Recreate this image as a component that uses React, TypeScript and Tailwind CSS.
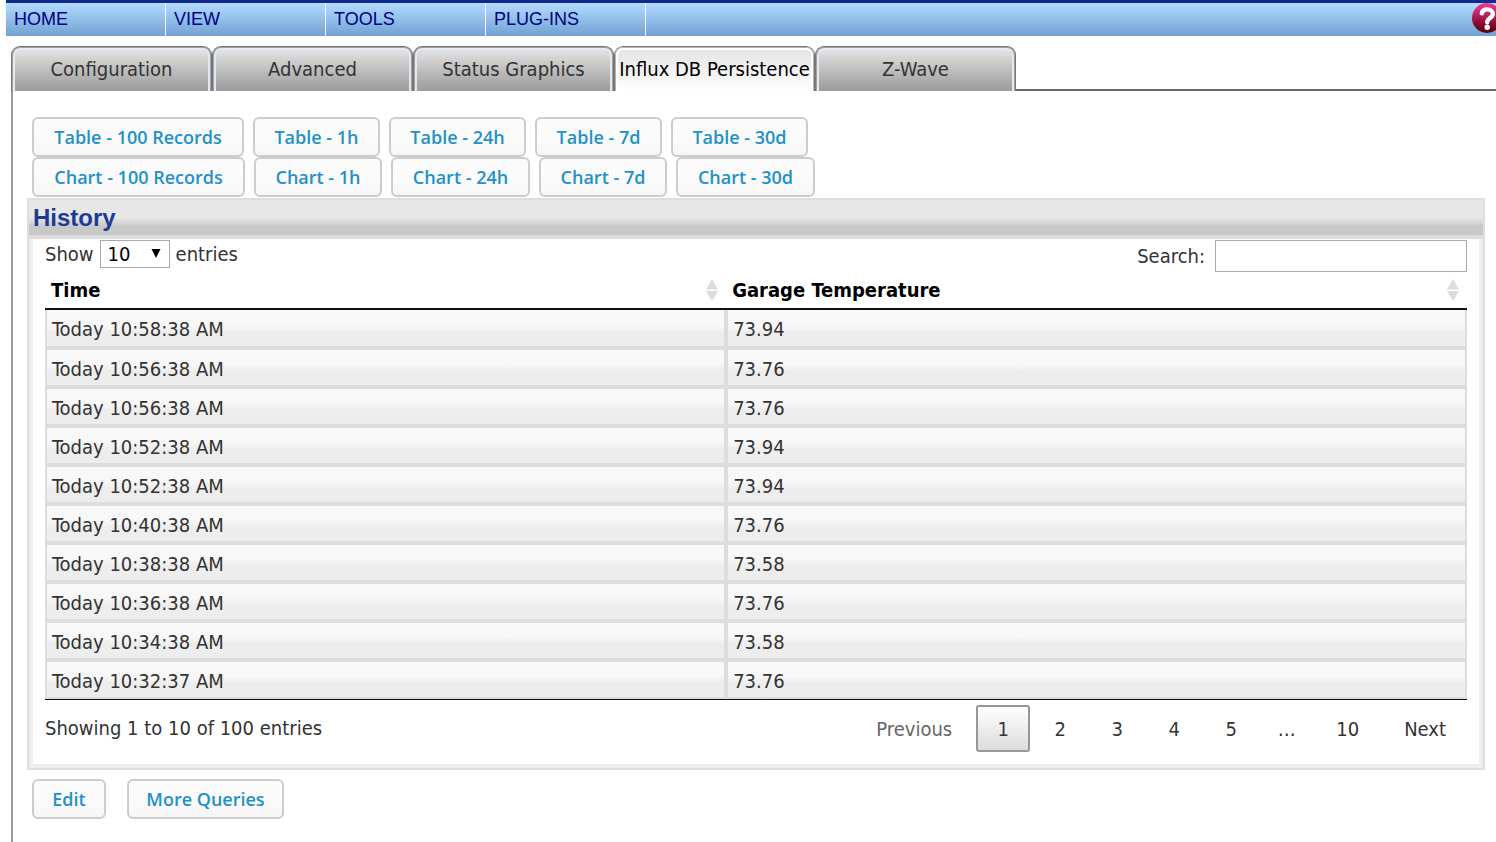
import { useState } from "react";

const menu = ["HOME", "VIEW", "TOOLS", "PLUG-INS"];

const tabs = ["Configuration", "Advanced", "Status Graphics", "Influx DB Persistence", "Z-Wave"];

const tableQueries = [
  { label: "Table - 100 Records", width: "w-[212px]" },
  { label: "Table - 1h", width: "w-[127px]" },
  { label: "Table - 24h", width: "w-[137px]" },
  { label: "Table - 7d", width: "w-[127px]" },
  { label: "Table - 30d", width: "w-[137px]" },
];

const chartQueries = [
  { label: "Chart - 100 Records", width: "w-[213px]" },
  { label: "Chart - 1h", width: "w-[128px]" },
  { label: "Chart - 24h", width: "w-[139px]" },
  { label: "Chart - 7d", width: "w-[128px]" },
  { label: "Chart - 30d", width: "w-[139px]" },
];

const rows = [
  ["Today 10:58:38 AM", "73.94"],
  ["Today 10:56:38 AM", "73.76"],
  ["Today 10:56:38 AM", "73.76"],
  ["Today 10:52:38 AM", "73.94"],
  ["Today 10:52:38 AM", "73.94"],
  ["Today 10:40:38 AM", "73.76"],
  ["Today 10:38:38 AM", "73.58"],
  ["Today 10:36:38 AM", "73.76"],
  ["Today 10:34:38 AM", "73.58"],
  ["Today 10:32:37 AM", "73.76"],
];

function HelpIcon() {
  return (
    <svg width="30" height="30" viewBox="0 0 30 30" className="block" aria-hidden="true">
      <defs>
        <linearGradient id="help-fill" x1="0" y1="0" x2="0" y2="1">
          <stop offset="0" stopColor="#f5359a" />
          <stop offset="0.3" stopColor="#c9286e" />
          <stop offset="0.65" stopColor="#8c0d35" />
          <stop offset="1" stopColor="#550008" />
        </linearGradient>
      </defs>
      <circle cx="15" cy="15" r="15" fill="url(#help-fill)" />
      <path
        d="M9.800 10.400C10.200 7.800 12.400 6.400 15.300 6.400c3.200 0 5.500 1.800 5.500 4.500 0 4-5.600 4.200-5.600 8.300"
        fill="none"
        stroke="#fff"
        strokeWidth="4.400"
        strokeLinecap="round"
      />
      <circle cx="15.200" cy="24.200" r="2.700" fill="#fff" />
    </svg>
  );
}

function SortIcon() {
  return (
    <svg width="12" height="22" viewBox="0 0 12 22" className="block" aria-hidden="true">
      <path d="M6 0 12 10.500H0ZM0 12h12L6 22Z" fill="#dcdcdc" />
    </svg>
  );
}

function QueryButton({ label, width }: { label: string; width: string }) {
  return (
    <button
      type="button"
      className={`${width} h-10 shrink-0 whitespace-nowrap rounded-[6px] border-2 border-[#cccccc] bg-linear-to-b from-[#fbfbfb] from-50% to-[#f6f6f6] font-['Open_Sans',sans-serif] text-lg leading-6 font-semibold text-[#2191c8]`}
    >
      {label}
    </button>
  );
}

function Tab({ label, active, onClick }: { label: string; active: boolean; onClick: () => void }) {
  return (
    <button
      type="button"
      role="tab"
      aria-selected={active}
      onClick={onClick}
      className={`h-[45px] w-[201px] shrink-0 rounded-t-[9px] border-x border-t border-[#777777] ${
        active ? "bg-white text-black" : "bg-[#9b9b9b] text-[#333333]"
      }`}
    >
      <span
        className={`block h-11 rounded-t-[8px] border-x border-t ${
          active ? "border-[#b4b4b4]" : "border-[#a0a0a0]"
        }`}
      >
        <span
          className={`flex h-[43px] items-center justify-center whitespace-nowrap rounded-t-[7px] border-x-2 border-t-2 bg-linear-to-b pb-1 leading-6 ${
            active
              ? "border-white from-[#e4e4e4] to-white"
              : "border-[#e3e9f2] from-[#e2e2e2] to-[#9b9b9b]"
          }`}
        >
          {label}
        </span>
      </span>
    </button>
  );
}

function PageButton({ label, current, onClick }: { label: string; current?: boolean; onClick?: () => void }) {
  return (
    <button
      type="button"
      onClick={onClick}
      aria-current={current ? "page" : undefined}
      className={`h-[47px] min-w-[54px] rounded-[3px] border-2 px-[19px] ${
        current ? "border-[#979797] bg-linear-to-b from-white to-[#dcdcdc]" : "border-transparent"
      } ${label === "Previous" ? "text-[#666666]" : "text-[#333333]"}`}
    >
      {label}
    </button>
  );
}

export default function App() {
  const [tab, setTab] = useState("Influx DB Persistence");
  const [page, setPage] = useState("1");

  return (
    <div className="flex min-h-screen flex-col bg-white font-['DejaVu_Sans_Condensed',Tahoma,sans-serif] text-xl leading-6 text-[#333333]">
      <header className="ml-1.5 flex h-9 justify-between overflow-hidden border-t-3 border-[#10298c] bg-linear-to-b from-[#b3dbff] to-[#72a2d2]">
        <nav className="flex font-['Liberation_Sans',Arial,sans-serif] text-lg leading-8 text-[#000080]">
          {menu.map((item) => (
            <a key={item} href="#" className="w-40 border-r border-white pl-2">
              {item}
            </a>
          ))}
        </nav>
        <button type="button" aria-label="Help" className="-mr-1.5 h-[30px] w-[30px] shrink-0">
          <HelpIcon />
        </button>
      </header>

      <div role="tablist" className="mt-2.5 ml-[11px] flex">
        {tabs.map((label) => (
          <Tab key={label} label={label} active={label === tab} onClick={() => setTab(label)} />
        ))}
        <div className="flex-1 border-b-2 border-[#666666]" />
      </div>

      <main className="ml-[11px] flex-1 border-l-2 border-[#999999] pt-[26px] pr-[11px] pl-3.5">
        <div className="flex gap-[9px] pl-[5px]">
          {tableQueries.map((q) => (
            <QueryButton key={q.label} {...q} />
          ))}
        </div>
        <div className="flex gap-[9px] pl-[5px]">
          {chartQueries.map((q) => (
            <QueryButton key={q.label} {...q} />
          ))}
        </div>

        <section className="mt-px border-2 border-[#dddddd]">
          <h2 className="h-[39px] border-b-4 border-[#dddddd] bg-linear-to-b from-[#e7e7e7] from-50% to-[#c8c8c8] to-75% pl-1 font-['Liberation_Sans',Arial,sans-serif] text-2xl leading-[35px] font-bold text-[#1f3a93]">
            History
          </h2>
          <div className="border-x-4 border-b-4 border-[#eeeeee] px-3 pb-3">
            <div className="flex h-[34px] items-start justify-between pt-px">
              <div className="flex items-center">
                <label htmlFor="page-length">Show</label>
                <span className="relative mx-1.5">
                  <select
                    id="page-length"
                    defaultValue="10"
                    className="block h-7 w-[70px] appearance-none border border-[#a9a9a9] bg-white pl-[7px] text-black"
                  >
                    <option>10</option>
                    <option>25</option>
                    <option>50</option>
                    <option>100</option>
                  </select>
                  <svg
                    width="10"
                    height="9"
                    viewBox="0 0 10 9"
                    className="pointer-events-none absolute top-[9px] right-[9px]"
                    aria-hidden="true"
                  >
                    <path d="M0.500 0h9L5 9Z" fill="#000" />
                  </svg>
                </span>
                <label htmlFor="page-length">entries</label>
              </div>
              <div className="flex items-center gap-2.5">
                <label htmlFor="search">Search:</label>
                <input
                  id="search"
                  type="text"
                  className="block h-8 w-[252px] border border-[#a9a9a9] bg-white px-1"
                />
              </div>
            </div>

            <table className="w-full table-fixed border-separate border-spacing-0 border-b border-[#111111]">
              <colgroup>
                <col className="w-[47.9%]" />
                <col />
              </colgroup>
              <thead>
                <tr>
                  {["Time", "Garage Temperature"].map((label) => (
                    <th key={label} scope="col" className="border-b-2 border-[#111111] p-0 text-left text-black">
                      <button
                        type="button"
                        className="flex h-[35px] w-full items-center justify-between pr-2 pb-0.5 pl-1.5 font-bold"
                      >
                        {label}
                        <SortIcon />
                      </button>
                    </th>
                  ))}
                </tr>
              </thead>
              <tbody>
                {rows.map(([time, value], i) => (
                  <tr key={i} className="group">
                    {[time, value].map((cell, j) => (
                      <td
                        key={j}
                        className="h-[39px] border-2 border-[#dddddd] bg-linear-to-b from-[#f8f8f8] from-40% to-[#ededed] to-60% bg-origin-border px-[5px] pt-0.5 pb-0 group-first:h-[38px] group-first:border-t-0"
                      >
                        {cell}
                      </td>
                    ))}
                  </tr>
                ))}
              </tbody>
            </table>

            <div className="flex items-start justify-between pt-[5px]">
              <p className="pt-[11px]">Showing 1 to 10 of 100 entries</p>
              <div className="flex items-center gap-[3px]">
                <PageButton label="Previous" />
                {["1", "2", "3", "4", "5"].map((p) => (
                  <PageButton key={p} label={p} current={p === page} onClick={() => setPage(p)} />
                ))}
                <span className="w-[51px] text-center">…</span>
                <PageButton label="10" current={page === "10"} onClick={() => setPage("10")} />
                <PageButton label="Next" />
              </div>
            </div>
          </div>
        </section>

        <div className="flex gap-[21px] pt-[9px] pl-[5px]">
          <QueryButton label="Edit" width="w-[74px]" />
          <QueryButton label="More Queries" width="w-[157px]" />
        </div>
      </main>
    </div>
  );
}
